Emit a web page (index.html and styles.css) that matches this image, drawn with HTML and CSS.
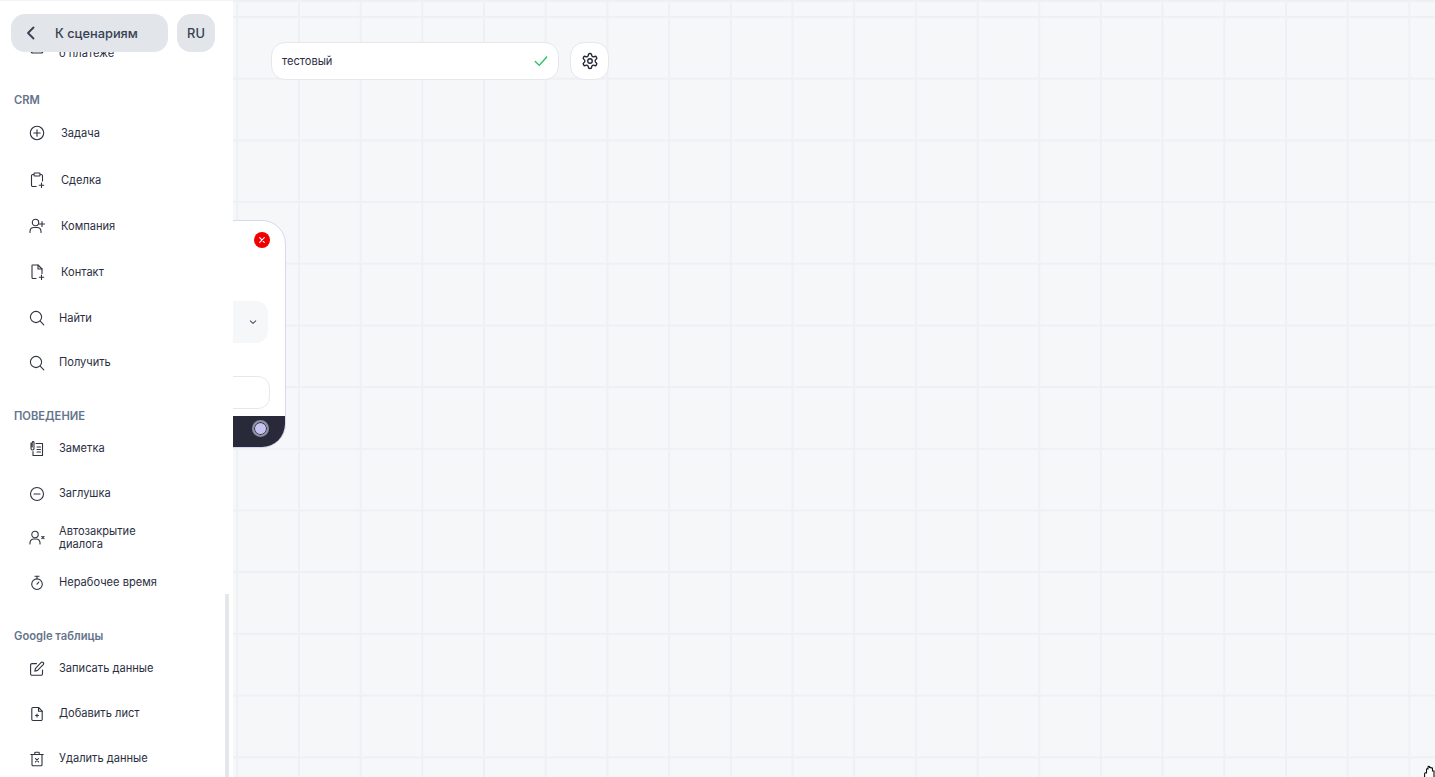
FILE: index.html
```html
<!DOCTYPE html>
<html lang="en">
<head>
  <meta charset="UTF-8" />
  <title>Сценарий</title>
  <link rel="stylesheet" href="styles.css">
</head>
<body>
  <div class="page">
    <!-- Sidebar -->
    <aside class="sidebar">
      <div class="sidebar-top">
        <button class="back-btn">
          <svg width="16" height="16" viewBox="0 0 16 16" fill="none" stroke="#374151" stroke-width="1.8" stroke-linecap="round" stroke-linejoin="round"><path d="M10.5 2.5 5 8l5.5 5.5"/></svg>
          <span>К сценариям</span>
        </button>
        <button class="lang-btn">RU</button>
      </div>
      <div class="scrollbar"></div>

      <div class="sidebar-scroll">
        <div class="item item-first">
          <svg class="icon" viewBox="0 0 16 16"><rect x="2" y="2" width="12" height="12" rx="2"/></svg>
          <span>Данные<br>о платеже</span>
        </div>

        <h4 class="group-title group-crm">CRM</h4>
        <div class="item item-crm item-task">
          <svg class="icon" viewBox="0 0 16 16"><circle cx="8" cy="8" r="6.7"/><path d="M8 4.8v6.4M4.8 8h6.4"/></svg>
          <span>Задача</span>
        </div>
        <div class="item item-crm">
          <svg class="icon" viewBox="0 0 16 16"><path d="M4.6 2.5H3.800a1.300 1.300 0 0 0-1.300 1.300v9.400a1.300 1.300 0 0 0 1.300 1.300h3.400M11.400 2.500h.8a1.300 1.300 0 0 1 1.300 1.300V9"/><rect x="5" y="1" width="6" height="3" rx=".7"/><path d="M12.500 11v4.400M10.300 13.200h4.400"/></svg>
          <span>Сделка</span>
        </div>
        <div class="item item-crm">
          <svg class="icon" viewBox="0 0 16 16"><circle cx="6.5" cy="4.5" r="3.2"/><path d="M1 14.5v-1.3a4 4 0 0 1 4-3.7h3a4 4 0 0 1 4 3.7v1.3M13 3.500v5M10.500 6h5"/></svg>
          <span>Компания</span>
        </div>
        <div class="item item-crm">
          <svg class="icon" viewBox="0 0 16 16"><path d="M7 14.500H4a1 1 0 0 1-1-1v-12a.5.5 0 0 1 .5-.5H9l4 4v4.500"/><path d="M9 1v4h4M12.500 11v4.400M10.300 13.200h4.400"/></svg>
          <span>Контакт</span>
        </div>
        <div class="item item-find">
          <svg class="icon" viewBox="0 0 16 16"><circle cx="7" cy="7" r="5.6"/><path d="m11.2 11.2 3.6 3.6"/></svg>
          <span>Найти</span>
        </div>
        <div class="item item-get">
          <svg class="icon" viewBox="0 0 16 16"><circle cx="7" cy="7" r="5.6"/><path d="m11.2 11.2 3.6 3.6"/></svg>
          <span>Получить</span>
        </div>

        <h4 class="group-title group-behavior">ПОВЕДЕНИЕ</h4>
        <div class="item">
          <svg class="icon" viewBox="0 0 16 16"><path d="M2 2v5.500a1.500 1.500 0 0 0 3 0V1.500a.9.9 0 0 0-1.800 0V6"/><path d="M7 2.500h6.500v12H4v-4M8 6h3.500M8 8.500h3.500M8 11h3.500"/></svg>
          <span>Заметка</span>
        </div>
        <div class="item">
          <svg class="icon" viewBox="0 0 16 16"><circle cx="8" cy="8" r="6.5"/><path d="M5 8h6"/></svg>
          <span>Заглушка</span>
        </div>
        <div class="item item-tight">
          <svg class="icon" viewBox="0 0 16 16"><circle cx="6" cy="4.5" r="3.2"/><path d="M1 14v-1.500a4 4 0 0 1 4-3.500h2a4 4 0 0 1 4 3.500V14M12.800 6.500l2.200 2.200M15 6.500l-2.200 2.200"/></svg>
          <span>Автозакрытие<br>диалога</span>
        </div>
        <div class="item">
          <svg class="icon" viewBox="0 0 16 16"><circle cx="8" cy="9.2" r="5.3"/><path d="M6 1.200h4M8 1.200v2.400M8 9.200l1.800-2"/></svg>
          <span>Нерабочее время</span>
        </div>

        <h4 class="group-title">Google таблицы</h4>
        <div class="item">
          <svg class="icon" viewBox="0 0 16 16"><path d="M13.500 9v3.800a1.400 1.400 0 0 1-1.400 1.400H3a1.400 1.400 0 0 1-1.400-1.400V4A1.400 1.400 0 0 1 3 2.600h4.500"/><path d="M12 1.600a1.400 1.400 0 0 1 2.200 2L8.600 9.400 5.800 10.200l.7-2.800z"/></svg>
          <span>Записать данные</span>
        </div>
        <div class="item">
          <svg class="icon" viewBox="0 0 16 16"><path d="M9.500 1.500H4a1.200 1.200 0 0 0-1.200 1.200v10.600A1.200 1.200 0 0 0 4 14.500h8a1.200 1.200 0 0 0 1.200-1.200V5.200z"/><path d="M9.500 1.500v3.700h3.700M8 8v3M6.500 9.500h3"/></svg>
          <span>Добавить лист</span>
        </div>
        <div class="item">
          <svg class="icon" viewBox="0 0 16 16"><path d="M1.800 3.500h12.400M5.800 3.500V1.800a.6.6 0 0 1 .6-.6h3.200a.6.6 0 0 1 .6.6v1.700"/><path d="M3 3.500v10.300a1 1 0 0 0 1 1h8a1 1 0 0 0 1-1V3.500M6.500 7.500l3 3.400M9.500 7.500l-3 3.400"/></svg>
          <span>Удалить данные</span>
        </div>
      </div>
    </aside>

    <!-- Canvas -->
    <main class="canvas">
      <div class="toolbar">
        <div class="name-field">
          <span>тестовый</span>
          <svg width="14" height="14" viewBox="0 0 16 16" fill="none" stroke="#22c55e" stroke-width="1.600" stroke-linecap="round" stroke-linejoin="round"><path d="M1.500 8.500 6 13 14.500 3.500"/></svg>
        </div>
        <button class="gear-btn">
          <svg width="18" height="18" viewBox="0 0 24 24" fill="none" stroke="#1f2430" stroke-width="1.800" stroke-linecap="round" stroke-linejoin="round"><path d="M12.220 2h-.44a2 2 0 0 0-2 2v.18a2 2 0 0 1-1 1.730l-.43.25a2 2 0 0 1-2 0l-.15-.08a2 2 0 0 0-2.730.73l-.22.38a2 2 0 0 0 .73 2.730l.15.1a2 2 0 0 1 1 1.720v.51a2 2 0 0 1-1 1.740l-.15.09a2 2 0 0 0-.73 2.730l.22.38a2 2 0 0 0 2.730.73l.15-.08a2 2 0 0 1 2 0l.43.25a2 2 0 0 1 1 1.730V20a2 2 0 0 0 2 2h.44a2 2 0 0 0 2-2v-.18a2 2 0 0 1 1-1.730l.43-.25a2 2 0 0 1 2 0l.15.08a2 2 0 0 0 2.730-.73l.22-.39a2 2 0 0 0-.73-2.730l-.15-.08a2 2 0 0 1-1-1.740v-.5a2 2 0 0 1 1-1.740l.15-.09a2 2 0 0 0 .73-2.730l-.22-.38a2 2 0 0 0-2.730-.73l-.15.08a2 2 0 0 1-2 0l-.43-.25a2 2 0 0 1-1-1.730V4a2 2 0 0 0-2-2z"/><circle cx="12" cy="12" r="3"/></svg>
        </button>
      </div>

      <!-- Node, mostly behind the sidebar -->
      <div class="node">
        <div class="node-head">
          <div class="node-close">
            <svg width="16" height="16" viewBox="0 0 16 16" fill="none" stroke="#fff" stroke-width="1.100" stroke-linecap="round"><path d="m5.700 5.700 4.600 4.600M10.300 5.700l-4.600 4.600"/></svg>
          </div>
        </div>
        <div class="node-select">
          <svg width="10" height="10" viewBox="0 0 10 10" fill="none" stroke="#4b5563" stroke-width="1.100" stroke-linecap="round" stroke-linejoin="round"><path d="m2.300 3.800 2.700 2.600 2.700-2.600"/></svg>
        </div>
        <div class="node-input"></div>
        <div class="node-foot">
          <div class="node-port"></div>
        </div>
      </div>

      <svg class="cursor" width="11" height="12" viewBox="0 0 11 12" fill="#fff" stroke="#111" stroke-width="1.100"><path d="M.6 12V8.800c0-1 1.800-1.500 1.900-.3V4.500c0-1 1.500-1 1.500 0V2c0-1 1.500-1 1.500 0v1c0-1 1.500-1 1.500 0v.5c0-1 1.500-1 1.500 0V6h1.500v6"/></svg>
    </main>
  </div>
</body>
</html>
```

FILE: styles.css
```css
:root {
  --bg: #f6f7f9;
  --grid-line: #eff0f4;
  --border: #e5e7eb;
  --btn-bg: #e2e5ea;
  --text: #2a2e42;
}

html, body {
  height: 100%;
}

body {
  margin: 0;
  font-family: Inter, "Liberation Sans", sans-serif;
  color: var(--text);
  overflow: hidden;
}

.page {
  display: flex;
  height: 100vh;
  background: var(--bg);
}

/* Sidebar */
.sidebar {
  position: relative;
  z-index: 2;
  flex: 0 0 233px;
  background: #fff;
  overflow: hidden;
  border-top: 1px solid #f3f4f6;
  box-sizing: border-box;
}

.sidebar-top {
  position: absolute;
  top: 13px;
  left: 11px;
  z-index: 3;
  display: flex;
  gap: 9px;
}

.back-btn,
.lang-btn {
  height: 38px;
  border: none;
  border-radius: 14px;
  background: var(--btn-bg);
  color: #374151;
  font-family: inherit;
  font-size: 12.800px;
  font-weight: 500;
}

.back-btn {
  display: flex;
  align-items: center;
  gap: 16px;
  width: 157px;
  padding: 0 0 0 12px;
}

.lang-btn {
  width: 38px;
  padding: 0;
}

.scrollbar {
  position: absolute;
  top: 593px;
  bottom: 0;
  left: 225px;
  width: 4px;
  background: #e5e7eb;
}

.sidebar-scroll {
  padding-top: 23px;
}

.group-title {
  margin: 24px 0 3px 14px;
  height: 14px;
  font-size: 11.200px;
  line-height: 14px;
  font-weight: 600;
  color: #64748b;
}

.group-crm {
  margin-top: 23px;
}

.group-behavior {
  margin-top: 25px;
}

.item {
  display: flex;
  align-items: center;
  gap: 14px;
  height: 45px;
  padding-left: 29px;
  font-size: 11.100px;
  line-height: 13px;
}

.item-first {
  height: 46px;
}

.item-crm {
  height: 46px;
  gap: 16px;
}

.item-task {
  margin-bottom: 1px;
}

.item-find {
  height: 46px;
}

.item-get {
  height: 43px;
}

.item-tight {
  height: 44px;
}

.icon {
  flex: 0 0 16px;
  width: 16px;
  height: 16px;
  fill: none;
  stroke: #2f3340;
  stroke-width: 1.100;
  stroke-linecap: round;
  stroke-linejoin: round;
}

/* Canvas */
.canvas {
  position: relative;
  flex: 1;
  min-width: 0;
  overflow: hidden;
  background-color: var(--bg);
  background-image:
    linear-gradient(to right, var(--grid-line) 2px, transparent 2px),
    linear-gradient(to bottom, var(--grid-line) 2px, transparent 2px);
  background-size: 61.700px 61.700px;
  background-position: 3.300px 16px;
  box-shadow: inset 0 2px 0 var(--grid-line);
}

.toolbar {
  display: flex;
  gap: 11px;
  padding: 42px 0 0 38px;
}

.name-field,
.gear-btn {
  box-sizing: border-box;
  height: 38px;
  background: #fff;
  border: 1px solid var(--border);
  border-radius: 14px;
}

.name-field {
  display: flex;
  align-items: center;
  justify-content: space-between;
  width: 288px;
  padding: 0 10px 0 10px;
  font-size: 11.100px;
}

.gear-btn {
  display: flex;
  align-items: center;
  justify-content: center;
  width: 39px;
  padding: 0;
}

.node {
  position: absolute;
  top: 220px;
  left: -147px;
  box-sizing: border-box;
  display: flex;
  flex-direction: column;
  width: 200px;
  height: 228px;
  background: #fff;
  border: 1px solid #d9d6f3;
  border-radius: 24px;
  overflow: hidden;
}

.node-head {
  display: flex;
  justify-content: flex-end;
  height: 80px;
  padding: 11px 15px 0 0;
  box-sizing: border-box;
}

.node-close {
  display: flex;
  align-items: center;
  justify-content: center;
  width: 16px;
  height: 16px;
  border-radius: 50%;
  background: #f00000;
}

.node-select {
  display: flex;
  align-items: center;
  justify-content: flex-end;
  box-sizing: border-box;
  height: 42px;
  margin-right: 17px;
  padding-right: 10px;
  background: var(--bg);
  border-radius: 12px;
}

.node-input {
  box-sizing: border-box;
  height: 33px;
  margin: 33px 15px 0 0;
  border: 1px solid var(--border);
  border-radius: 12px;
}

.node-foot {
  display: flex;
  align-items: center;
  justify-content: flex-end;
  box-sizing: border-box;
  height: 31px;
  margin-top: auto;
  padding: 0 16px 6px 0;
  background: #282a3a;
}

.node-port {
  box-sizing: border-box;
  width: 17px;
  height: 17px;
  border: 2px solid #8d8ea0;
  border-radius: 50%;
  background: #c5c3f2;
  box-shadow: inset 0 0 0 1px #282a3a;
}

.cursor {
  position: absolute;
  right: 0;
  bottom: 0;
}
```
